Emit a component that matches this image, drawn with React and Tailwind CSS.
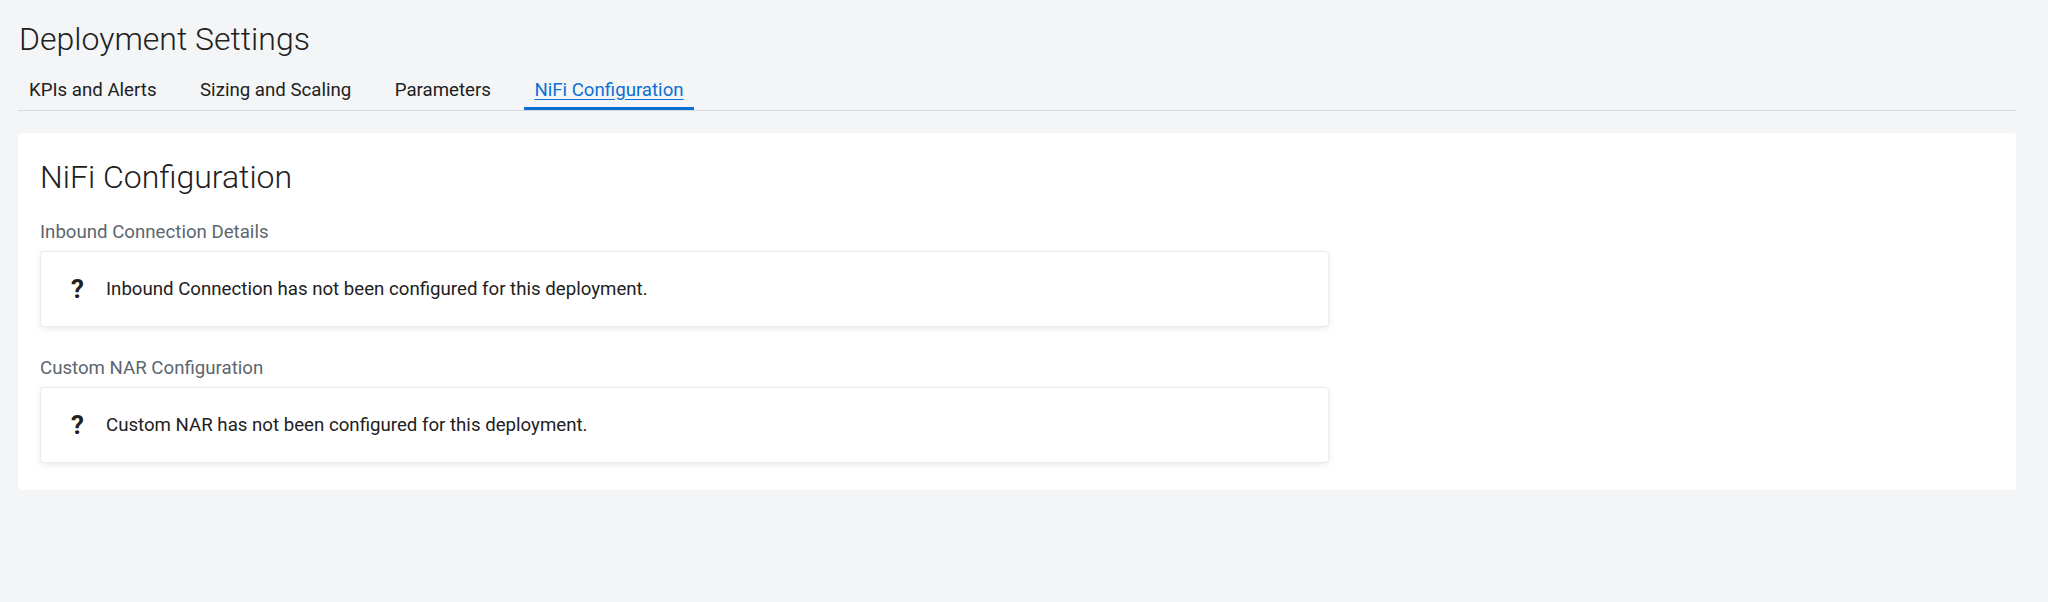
export default function App() {
  const tabs = ["KPIs and Alerts", "Sizing and Scaling", "Parameters", "NiFi Configuration"];
  const active = 3;
  return (
    <div className="min-h-[602px] bg-[#f4f5f7] pl-[18px] pr-[32px] pt-[19.5px] text-[#212121]" style={{ fontFamily: "Roboto, 'Liberation Sans', sans-serif" }}>
      <h1 className="ml-[1px] text-[32px] font-light leading-[38px] text-[#212121]">Deployment Settings</h1>
      <div className="mt-[10px] flex gap-[23.5px] border-b border-[#d5d7db] pl-[1px]">
        {tabs.map((t, i) => (
          <div
            key={t}
            className={
              "px-[10px] pt-[10px] pb-[5px] text-[18.67px] leading-[24px] border-b-[3px] " +
              (i === active ? "border-[#0b70d4] text-[#0b70d4] underline underline-offset-[3px]" : "border-transparent text-[#212121]")
            }
          >
            {t}
          </div>
        ))}
      </div>
      <div className="mt-[22px] rounded-[4px] bg-white px-[22px] pt-[25px] pb-[26.5px]">
        <h2 className="text-[32px] font-light leading-[38px] text-[#212121]">NiFi Configuration</h2>
        <div className="mt-[24px] text-[18.67px] leading-[24px] text-[#5c6670]">Inbound Connection Details</div>
        <div className="mt-[7px] flex h-[76px] w-[1289px] items-center rounded-[4px] border border-[#ececec] bg-white pl-[30px] shadow-[0_2px_6px_rgba(0,0,0,0.08)]">
          <span className="w-[35px] text-[26px] font-bold leading-none text-[#212121]">?</span>
          <span className="text-[18.67px] leading-[24px] text-[#212121]">Inbound Connection has not been configured for this deployment.</span>
        </div>
        <div className="mt-[29.5px] text-[18.67px] leading-[24px] text-[#5c6670]">Custom NAR Configuration</div>
        <div className="mt-[7px] flex h-[76px] w-[1289px] items-center rounded-[4px] border border-[#ececec] bg-white pl-[30px] shadow-[0_2px_6px_rgba(0,0,0,0.08)]">
          <span className="w-[35px] text-[26px] font-bold leading-none text-[#212121]">?</span>
          <span className="text-[18.67px] leading-[24px] text-[#212121]">Custom NAR has not been configured for this deployment.</span>
        </div>
      </div>
    </div>
  );
}
